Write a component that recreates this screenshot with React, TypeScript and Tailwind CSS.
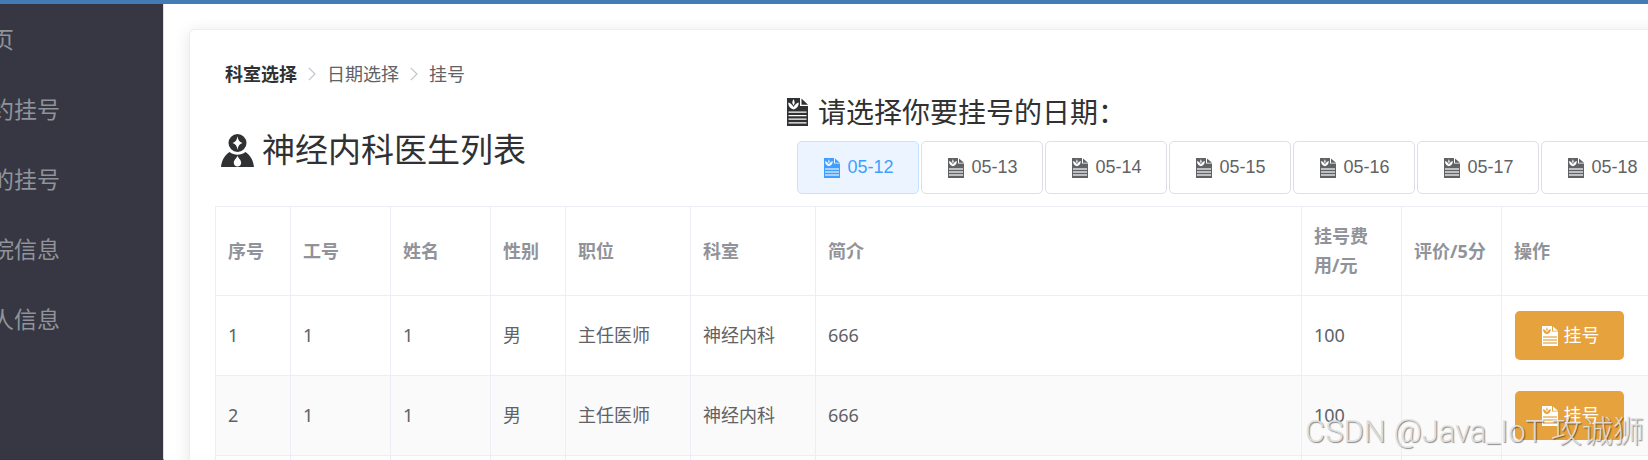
const navItems = ["首页", "预约挂号", "我的挂号", "住院信息", "个人信息"];

const dates = ["05-12", "05-13", "05-14", "05-15", "05-16", "05-17", "05-18"];

const columns = [
  { title: "序号", width: "w-[75px]" },
  { title: "工号", width: "w-[100px]" },
  { title: "姓名", width: "w-[100px]" },
  { title: "性别", width: "w-[75px]" },
  { title: "职位", width: "w-[125px]" },
  { title: "科室", width: "w-[125px]" },
  { title: "简介", width: "" },
  { title: "挂号费用/元", width: "w-[100px]" },
  { title: "评价/5分", width: "w-[100px]" },
  { title: "操作", width: "w-[200px]" },
];

const doctors = [
  ["1", "1", "1", "男", "主任医师", "神经内科", "666", "100", ""],
  ["2", "1", "1", "男", "主任医师", "神经内科", "666", "100", ""],
  ["3", "1", "1", "男", "主任医师", "神经内科", "666", "100", ""],
];

function DocIcon({ className }: { className: string }) {
  return (
    <svg viewBox="0 0 21 28" className={className} fill="currentColor" aria-hidden="true">
      <path
        fillRule="evenodd"
        d="M0 0H13V8H21V28H0Z
           M6.5 1.2C5.6 2.4 5.2 3.8 5.4 5.2L6.5 7.4L7.6 5.2C7.8 3.8 7.4 2.4 6.5 1.2Z
           M1.2 4.6C1.2 8.2 3 10.8 6.5 11.6C10 10.8 11.8 8.2 11.8 4.6C9.6 5.2 8 6.6 6.5 9C5 6.6 3.4 5.2 1.2 4.6Z
           M1.5 13.6V14.8H19.5V13.6Z M1.5 17V18.2H19.5V17Z M1.5 20.6V21.8H19.5V20.6Z M1.5 24.2V25.4H19.5V24.2Z"
      />
      <path d="M14.5 0.6L21 6.8H14.5Z" />
    </svg>
  );
}

function SmallDocIcon({ className }: { className: string }) {
  return (
    <svg viewBox="0 0 16 20" className={className} fill="currentColor" aria-hidden="true">
      <path
        fillRule="evenodd"
        d="M0 0H10V5.6H16V20H0Z
           M4.9 1L4.1 3.6L4.9 5.4L5.7 3.6Z
           M1 3C1 5.8 2.4 7.6 4.9 8.2C7.4 7.6 8.8 5.8 8.8 3C7 3.6 5.8 4.6 4.9 6.4C4 4.6 2.8 3.6 1 3Z
           M1 10V12H15V10Z M1 13V15H15V13Z M1 16V18H15V16Z"
      />
      <path d="M11 0.4L16 4.8H11Z" />
      <path d="M1 10H15V12H1Z M1 13H15V15H1Z M1 16H15V18H1Z" opacity="0.4" />
    </svg>
  );
}

function DoctorIcon({ className }: { className: string }) {
  return (
    <svg viewBox="0 0 33 33" className={className} fill="currentColor" aria-hidden="true">
      <path
        fillRule="evenodd"
        d="M16.5 0A9 9 0 0 1 16.5 18A9 9 0 0 1 16.5 0Z
           M16.5 2.2C15.9 6 14.6 8 11.6 9C14.6 10 15.9 12 16.5 15.8C17.1 12 18.4 10 21.4 9C18.4 8 17.1 6 16.5 2.2Z"
      />
      <path
        fillRule="evenodd"
        d="M8.6 18C13 21.6 20 21.6 24.4 18C29.4 21 32.4 26.8 33 33H0C0.6 26.8 3.6 21 8.6 18Z
           M16.5 21.4C16 24 12.8 25.6 12.8 28.8C12.8 31 14.4 32.6 16.5 32.6C18.6 32.6 20.2 31 20.2 28.8C20.2 25.6 17 24 16.5 21.4Z"
      />
    </svg>
  );
}

function Chevron() {
  return (
    <svg
      viewBox="0 0 8 14"
      className="mx-[11px] h-3.5 w-2 text-[#c0c4cc]"
      fill="none"
      stroke="currentColor"
      strokeWidth="1.2"
      aria-hidden="true"
    >
      <path d="M0.8 0.8L7 7L0.8 13.2" />
    </svg>
  );
}

export default function App() {
  return (
    <div className="relative flex h-screen flex-col overflow-hidden bg-white font-['Noto_Sans','Noto_Sans_CJK_SC',sans-serif] text-[#606266]">
      <div className="h-1 shrink-0 bg-[#437bb5]" />
      <div className="flex min-h-0 flex-1">
        <aside className="w-[164px] shrink-0 overflow-hidden border-r border-b border-r-[#dcdfe6] border-b-[#3b2f42] bg-[#363743]">
          <nav className="-ml-8 flex flex-col">
            {navItems.map((item) => (
              <a key={item} href="#" className="flex h-[70px] items-center pt-px text-[23px] text-[#909399]">
                {item}
              </a>
            ))}
          </nav>
        </aside>

        <main className="min-w-0 flex-1 overflow-hidden pt-[25px] pl-[25px]">
          <section className="-mr-20 min-h-screen rounded-md border border-[#ebeef5] bg-white px-[25px] pt-[30px] shadow-[0_2px_15px_rgba(0,0,0,0.1)]">
            <nav className="flex h-7 items-center pl-2.5 text-[18px] leading-[26px]">
              <a href="#" className="font-bold text-[#303133]">科室选择</a>
              <Chevron />
              <span>日期选择</span>
              <Chevron />
              <span>挂号</span>
            </nav>

            <div className="flex">
              <h1 className="flex w-[571px] shrink-0 items-center gap-2 pt-[18px] pl-1.5 text-[33px] leading-10 text-[#303133]">
                <DoctorIcon className="size-[33px]" />
                神经内科医生列表
              </h1>
              <div className="pt-2">
                <h2 className="flex items-center gap-2.5 pl-px text-[28px] leading-8 text-[#303133]">
                  <DocIcon className="h-7 w-[21px]" />
                  请选择你要挂号的日期：
                </h2>
                <div className="mt-[13px] flex gap-0.5 pl-[11px]">
                  {dates.map((date, i) => (
                    <button
                      key={date}
                      type="button"
                      className={
                        "flex h-[53px] w-[122px] shrink-0 items-center justify-center gap-[7px] rounded-[5px] border pl-0.5 font-['Liberation_Sans',sans-serif] text-[18px] " +
                        (i === 0
                          ? "border-[#c6e2ff] bg-[#ecf5ff] text-[#409eff]"
                          : "border-[#dcdfe6] bg-white text-[#606266]")
                      }
                    >
                      <SmallDocIcon className="h-5 w-4" />
                      {date}
                    </button>
                  ))}
                </div>
              </div>
            </div>

            <table className="mt-3 w-full table-fixed border-separate border-spacing-0 border-t border-l border-[#ebeef5] text-[18px] leading-[29px]">
              <thead>
                <tr className="h-[89px] text-left text-[#909399]">
                  {columns.map((column) => (
                    <th
                      key={column.title}
                      className={"border-r border-b border-[#ebeef5] px-3 font-bold " + column.width}
                    >
                      {column.title}
                    </th>
                  ))}
                </tr>
              </thead>
              <tbody>
                {doctors.map((doctor) => (
                  <tr key={doctor[0]} className="h-20 even:bg-[#fafafa]">
                    {doctor.map((value, i) => (
                      <td key={i} className="border-r border-b border-[#ebeef5] px-3">
                        {value}
                      </td>
                    ))}
                    <td className="border-r border-b border-[#ebeef5] px-[13px]">
                      <button
                        type="button"
                        className="flex h-[49px] w-[109px] items-center justify-center gap-1.5 rounded-[5px] bg-[#e6a23c] pl-0.5 text-[18px] text-white"
                      >
                        <SmallDocIcon className="h-5 w-4" />
                        挂号
                      </button>
                    </td>
                  </tr>
                ))}
              </tbody>
            </table>
          </section>
        </main>
      </div>

      <div className="pointer-events-none absolute right-1 bottom-2 font-['Roboto','Noto_Sans_CJK_SC',sans-serif] text-[31px] leading-10 font-light whitespace-nowrap text-[#e4e4e4]/90 [text-shadow:1px_1px_1px_rgba(0,0,0,0.45)]">
        CSDN @Java_IoT 攻诚狮
      </div>
    </div>
  );
}
